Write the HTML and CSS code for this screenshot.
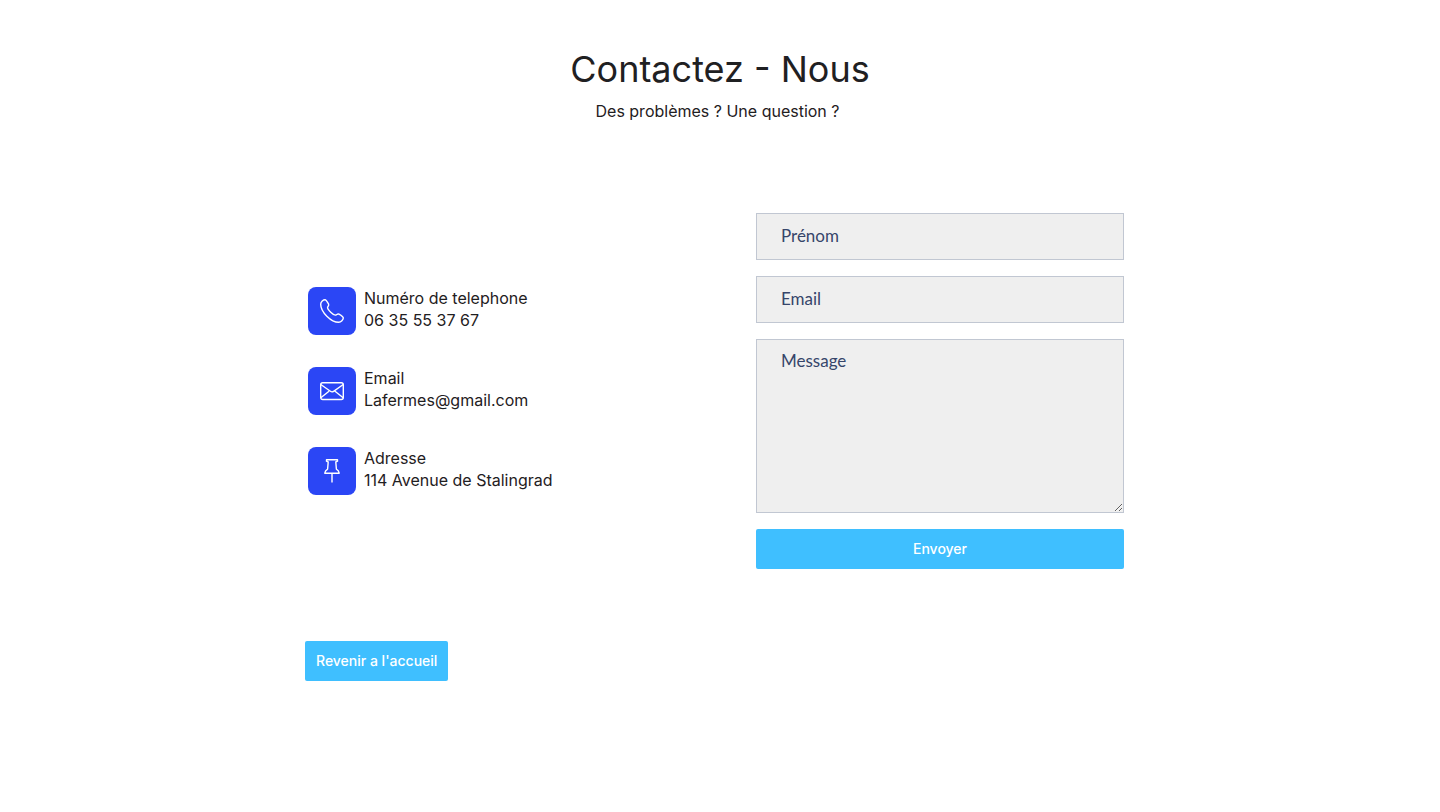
FILE: index.html
```html
<!DOCTYPE html>
<html lang="fr">
<head>
<meta charset="utf-8">
<meta name="viewport" content="width=device-width, initial-scale=1">
<title>Contactez - Nous</title>
<link rel="stylesheet" href="styles.css">
</head>
<body>
<main class="page">
  <header class="heading">
    <h1 class="title">Contactez - Nous</h1>
    <p class="subtitle">Des problèmes ? Une question ?</p>
  </header>
  <section class="contact">
    <ul class="details">
      <li class="detail">
        <span class="badge"><svg class="icon" viewBox="0 0 24 24" aria-hidden="true"><path d="M5 .8C3.400.8.7 2.800.7 5.200c0 7.800 10.400 18.100 18 18.100 2.400 0 4.600-2.600 4.600-4.200 0-1.200-3-3.200-4.300-3.900-1.300-.7-1.900.3-3 .8-1 .5-3-.5-5-2.500S7.100 9.400 7.600 8.200c.4-1 1.600-1.700 1-3C7.900 3.900 6.100.8 5 .8z"/></svg></span>
        <div><p class="line">Numéro de telephone</p><p class="line">06 35 55 37 67</p></div>
      </li>
      <li class="detail">
        <span class="badge"><svg class="icon" viewBox="0 0 24 24" aria-hidden="true"><rect x=".7" y="3.700" width="22.600" height="16.800" rx="2"/><path d="M.8 5.500l9.600 6.800q1.600 1.100 3.200 0l9.600-6.800M.8 18.800l8.200-6.500M23.200 18.800L15 12.300"/></svg></span>
        <div><p class="line">Email</p><p class="line">Lafermes@gmail.com</p></div>
      </li>
      <li class="detail">
        <span class="badge"><svg class="icon" viewBox="0 0 24 24" aria-hidden="true"><path d="M6.500.7h11v1.500l-1.700.8.6 7.200c1.600.9 2.600 2.200 2.800 4H4.800c.2-1.800 1.200-3.100 2.800-4L8.200 3l-1.700-.8zM12 14.200v9.200"/></svg></span>
        <div><p class="line">Adresse</p><p class="line">114 Avenue de Stalingrad</p></div>
      </li>
    </ul>
    <form class="form">
      <input class="field" type="text" placeholder="Prénom" aria-label="Prénom">
      <input class="field" type="email" placeholder="Email" aria-label="Email">
      <textarea class="field message" placeholder="Message" aria-label="Message"></textarea>
      <button class="button" type="submit">Envoyer</button>
    </form>
  </section>
  <a class="button back" href="#">Revenir a l'accueil</a>
</main>
</body>
</html>
```
FILE: styles.css
```css
*, *::before, *::after {
  box-sizing: border-box;
}

body {
  margin: 0;
  background: #fff;
  color: #1f2022;
  font: 16px/22px Inter, "Liberation Sans", sans-serif;
}

.page {
  max-width: 830px;
  margin: 0 auto;
  padding: 48px 0;
}

.heading {
  text-align: center;
}

.title {
  margin: 0;
  font-size: 36px;
  line-height: 42px;
  font-weight: 400;
}

.subtitle {
  margin: 10px 5px 0 0;
}

.contact {
  display: flex;
  flex-wrap: wrap;
  justify-content: space-between;
  align-items: center;
  gap: 32px;
  padding: 91px 11px 72px 3px;
}

.details {
  display: grid;
  gap: 32px;
  margin: 0;
  padding: 0;
  list-style: none;
}

.detail {
  display: flex;
  gap: 8px;
}

.badge {
  display: grid;
  place-items: center;
  width: 48px;
  height: 48px;
  border-radius: 8px;
  background: #2b46f5;
}

.icon {
  width: 24px;
  height: 24px;
  fill: none;
  stroke: #fff;
  stroke-width: 1.4;
  stroke-linejoin: round;
}

.line {
  margin: 0;
}

.form {
  display: grid;
  gap: 16px;
  width: 368px;
}

.field {
  display: block;
  width: 100%;
  height: 47px;
  margin: 0;
  padding: 0 24px 2px;
  border: 1px solid #c1c7d2;
  border-radius: 0;
  background: #efefef;
  color: #36456a;
  font: 17px/20px Lato, sans-serif;
}

.field::placeholder {
  color: #36456a;
  opacity: 1;
}

.message {
  height: 174px;
  padding: 11px 24px;
  resize: vertical;
}

.button {
  display: block;
  height: 40px;
  padding: 0 11px;
  border: 0;
  border-radius: 2px;
  background: #3fbfff;
  color: #fff;
  font: 500 14px/40px Inter, "Liberation Sans", sans-serif;
  text-align: center;
  text-decoration: none;
  cursor: pointer;
}

.back {
  width: fit-content;
}
```
